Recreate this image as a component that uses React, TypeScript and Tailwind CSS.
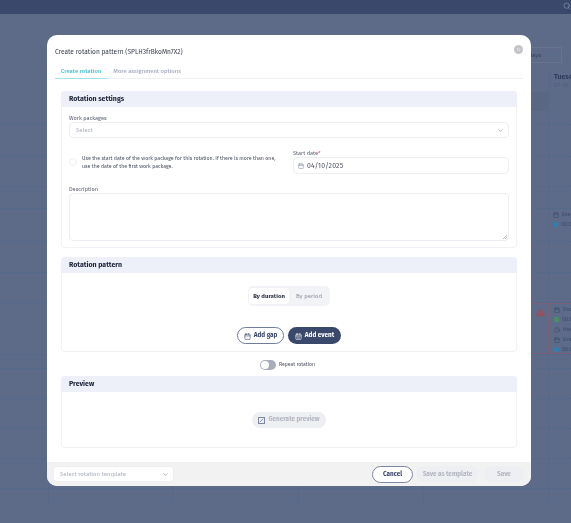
import type { ReactNode } from "react";
import { Calendar, CalendarDays, ChevronDown, Clock, X, Search, TriangleAlert } from "lucide-react";

const font = { fontFamily: '"Fira Sans", Roboto, "Noto Sans", sans-serif' };

function Section({ title, children, className }: { title: string; children: ReactNode; className: string }) {
  return (
    <section className={`flex flex-col rounded border border-t-0 border-[#f1f2f5] ${className}`}>
      <div className="-mx-px flex h-4 shrink-0 items-center rounded-t bg-[#edf0f8] px-2 pt-px text-[7px] font-bold text-[#20263a]">{title}</div>
      {children}
    </section>
  );
}

function EventChip({ label, dot }: { label: string; dot: string }) {
  return (
    <div className="flex flex-col gap-[3px] whitespace-nowrap text-[5.5px] leading-[7px] text-[#3d4a6c]">
      <div className="flex items-center gap-[3px]"><Calendar size={6} />{label}</div>
      <div className="flex items-center gap-[3px]"><span className={`h-[5px] w-[5px] rounded-full ${dot}`} />00:00</div>
    </div>
  );
}

function Row({ h, col5, col6, red, last }: { h: string; col5?: ReactNode; col6?: ReactNode; red?: boolean; last?: boolean }) {
  const base = "border-r border-dotted border-[#526787]";
  return (
    <div className={`grid shrink-0 grid-cols-[49px_124px_126px_125px_125px_1fr] ${h} ${last ? "" : "border-b border-dotted border-[#526787]"}`}>
      <div className={base} />
      <div className={base} />
      <div className={base} />
      <div className={base} />
      <div className={red ? "flex justify-end border border-[#7a6078] pr-[3px] pt-[4px]" : base}>{col5}</div>
      <div className={`pl-[4px] ${red ? "border border-r-0 border-[#7a6078] pt-[2px]" : ""}`}>{col6}</div>
    </div>
  );
}

function Background() {
  return (
    <div className="flex h-full flex-col bg-[#5d6b88]">
      <div className="flex h-[14px] shrink-0 items-start justify-end bg-[#3a486c] pt-0.5">
        <Search size={8} className="text-[#8a94ae]" />
      </div>
      <div className="h-[33px] shrink-0" />
      <div className="flex h-4 shrink-0 justify-end pr-[9px]">
        <div className="flex w-[37px] items-center justify-end gap-[8px] border border-[#67748f] pr-[5px] text-[6px] text-[#37435f]">
          days <ChevronDown size={7} className="text-[#2f7a98]" />
        </div>
      </div>
      <div className="ml-[549px] mt-[7px] h-[22px] shrink-0 whitespace-nowrap border-l border-dotted border-[#526787] pl-[4px] pt-[3px] leading-[8px]">
        <div className="text-[7px] font-bold text-[#303c5b]">Tuesd</div>
        <div className="text-[6px] text-[#4f5d7c]">07-10-</div>
      </div>
      <Row h="h-[33px]" col5={<div className="h-[19px] w-full bg-[#5a6782]" />} />
      <Row h="h-[32px]" />
      <Row h="h-[30px]" />
      <Row h="h-[22px]" />
      <Row h="h-[33px]" col6={<div className="pt-[2px]"><EventChip label="Event" dot="bg-[#2f7fb0]" /></div>} />
      <Row h="h-[31px]" />
      <Row h="h-[30px]" />
      <Row
        h="h-[52px]"
        red
        col5={<TriangleAlert size={9} fill="#94525f" stroke="#94525f" />}
        col6={
          <div className="flex flex-col gap-[3px] whitespace-nowrap text-[5.5px] leading-[7px] text-[#3d4a6c]">
            <div className="flex items-center gap-[3px]"><Calendar size={6} />Dome</div>
            <div className="flex items-center gap-[3px]"><span className="h-[5px] w-[5px] bg-[#4c8a6a]" />00:00</div>
            <div className="flex items-center gap-[3px]"><Clock size={6} />Hera</div>
            <EventChip label="Event" dot="bg-[#2f7fb0]" />
          </div>
        }
      />
      <Row h="h-[14px]" />
      <Row h="h-[30px]" />
      <Row h="h-[30px]" />
      <Row h="h-[30px]" />
      <Row h="h-[30px]" />
      <Row h="h-[14px]" last />
    </div>
  );
}

export default function App() {
  return (
    <div className="relative h-[523px] w-full overflow-hidden blur-[0.3px]" style={font}>
      <Background />
      <div className="absolute left-[47px] top-[35px] flex h-[451px] w-[484px] flex-col overflow-hidden rounded-[10px] bg-white">
        <div className="relative flex-1 px-2 pt-3">
          <div className="text-[6.6px] leading-[10px] text-[#3d4252]">Create rotation pattern (SPLH3frBkoMn7X2)</div>
          <button className="absolute right-2 top-[10px] flex h-[9px] w-[9px] items-center justify-center rounded-full bg-[#c4c5c9] text-white">
            <X size={5} />
          </button>
          <div className="mt-[9px] flex h-[13px] gap-[6px] border-b border-[#eff0f3] text-[5.9px] font-medium leading-[10px]">
            <div className="-mb-px border-b border-[#a5e3ea] px-[6px] text-[#3fc1d1]">Create rotation</div>
            <div className="text-[#a8adbf]">More assignment options</div>
          </div>
          <div className="mt-3 flex flex-col px-[6px]">
            <Section title="Rotation settings" className="h-[157px]">
              <div className="flex flex-1 flex-col px-[7px] pt-[8px] text-[5.6px] leading-[7px] text-[#5b6070]">
                <label>Work packages</label>
                <div className="flex h-4 shrink-0 items-center justify-between rounded-sm border border-[#eceef2] pl-[6px] pr-[4px] text-[6px] text-[#a8adbf]">
                  Select <ChevronDown size={7} className="text-[#7d8499]" />
                </div>
                <div className="mt-[17px] flex h-[21px] shrink-0 gap-[5px]">
                  <div className="mt-[3px] h-2 w-2 shrink-0 rounded-sm border border-[#eceef2]" />
                  <div className="-mt-px w-[197px] shrink-0 text-[5.25px] leading-[8px] text-[#4a4f5f]">
                    Use the start date of the work package for this rotation. If there is more than one, use the date of the first work package.
                  </div>
                  <div className="-mt-[5px] ml-[9px] flex-1">
                    <label>Start date<span className="text-red-500">*</span></label>
                    <div className="flex h-[17px] items-center gap-[3px] rounded-sm border border-[#eceef2] pl-[4px] pt-px text-[6.8px] tracking-[0.2px] text-[#4a4f5f]">
                      <Calendar size={6} className="text-[#7d8499]" /> 04/10/2025
                    </div>
                  </div>
                </div>
                <label className="mt-[10px]">Description</label>
                <div className="relative h-[48px] shrink-0 rounded-sm border border-[#eceef2]">
                  <svg width="4" height="4" viewBox="0 0 4 4" className="absolute bottom-px right-px">
                    <path d="M0 4 4 0M2 4 4 2" stroke="#8d8f96" strokeWidth="0.6" />
                  </svg>
                </div>
              </div>
            </Section>
            <Section title="Rotation pattern" className="mt-[9px] h-[95px]">
              <div className="flex flex-1 flex-col items-center pt-[13px]">
                <div className="flex h-5 w-[82px] items-center justify-between rounded-[5px] bg-[#f2f3f6] px-px text-[6px]">
                  <div className="flex h-4 w-10 items-center justify-center rounded-[4px] bg-white font-bold text-[#2e3448]">By duration</div>
                  <div className="flex h-4 w-10 items-center justify-center text-[#8e92a0]">By period</div>
                </div>
                <div className="mt-[21px] flex gap-1 text-[6.4px] font-bold">
                  <button className="flex h-[17px] w-[47px] items-center justify-center gap-[3px] rounded-full border border-[#6f7c9b] pt-px text-[#3a486c]">
                    <Calendar size={7} /> Add gap
                  </button>
                  <button className="flex h-[17px] w-[53px] items-center justify-center gap-[3px] rounded-full bg-[#3a486c] pt-px text-white">
                    <CalendarDays size={7} /> Add event
                  </button>
                </div>
              </div>
            </Section>
            <div className="flex h-[24px] items-center justify-center gap-[3px] pr-[3px] pt-[2px] text-[5.1px] text-[#4a4f5f]">
              <div className="flex h-[10px] w-4 items-center rounded-full bg-[#a9adb9] pl-px">
                <div className="h-2 w-2 rounded-full bg-white" />
              </div>
              Repeat rotation
            </div>
            <Section title="Preview" className="h-[72px]">
              <div className="flex flex-1 items-start justify-center pt-5">
                <button className="flex h-4 w-[74px] items-center justify-center gap-[3px] rounded-full bg-[#eeeff2] text-[6.4px] font-bold text-[#b3b6c0]">
                  <svg width="7" height="7" viewBox="0 0 7 7" fill="none" stroke="#7f88a3">
                    <rect x="0.5" y="0.5" width="6" height="6" strokeWidth="1" />
                    <path d="M1.8 5.2 5.2 1.8" strokeWidth="0.9" />
                  </svg>
                  Generate preview
                </button>
              </div>
            </Section>
          </div>
        </div>
        <div className="flex h-6 shrink-0 items-center justify-between bg-[#f2f2f2] pl-[6px] pr-[7px]">
          <div className="flex h-4 w-[121px] items-center justify-between rounded-sm border border-[#eceef2] bg-white pl-[6px] pr-1 text-[6px] text-[#a8adbf]">
            Select rotation template <ChevronDown size={7} className="text-[#7d8499]" />
          </div>
          <div className="flex items-center gap-[3px] text-[6.4px] font-bold">
            <button className="flex h-[17px] w-[41px] items-center justify-center rounded-full border border-[#7a86a3] bg-white pt-px text-[#3a486c]">Cancel</button>
            <button className="flex h-4 w-[63px] items-center justify-center rounded-full bg-[#eeeff2] pt-px text-[#b3b6c0]">Save as template</button>
            <button className="ml-[2px] flex h-4 w-10 items-center justify-center rounded-full bg-[#eeeff2] pt-px text-[#b3b6c0]">Save</button>
          </div>
        </div>
      </div>
    </div>
  );
}
